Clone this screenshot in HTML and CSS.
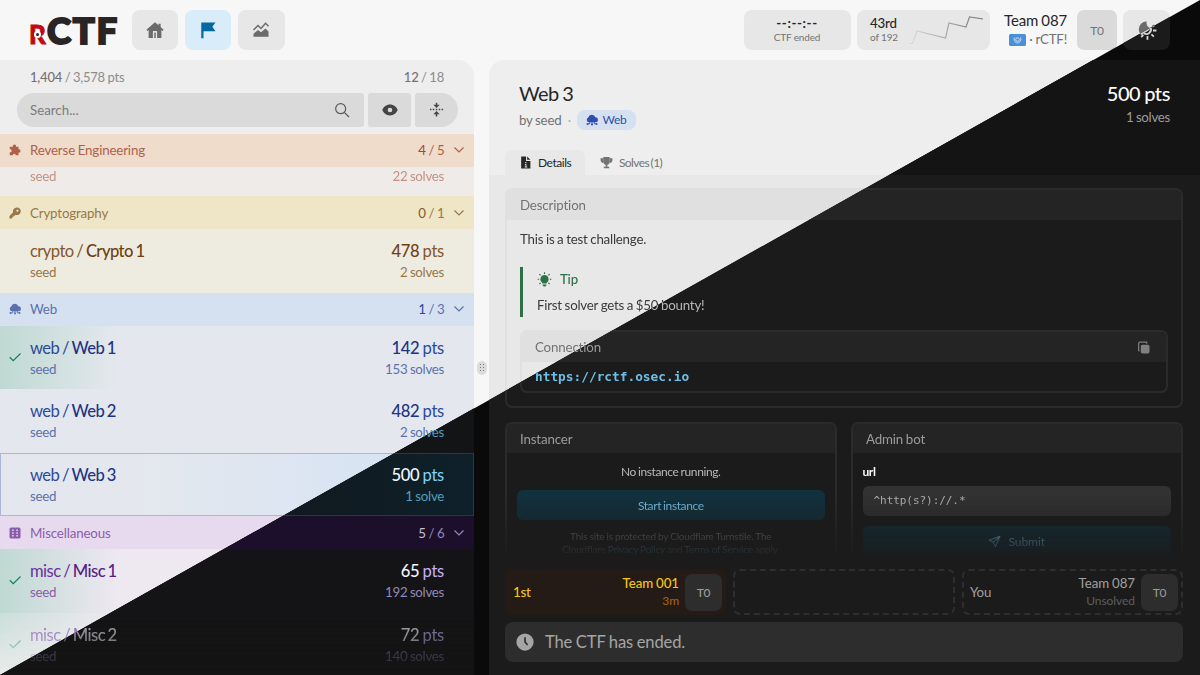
FILE: index.html
```html
<!DOCTYPE html>
<html lang="en">
<head>
    <meta charset="UTF-8">
    <meta name="viewport" content="width=device-width, initial-scale=1.0">
    <title>rCTF - Challenges</title>
    <link rel="stylesheet" href="styles.css">
</head>
<body>

    <!-- Icons -->
    <svg class="sprite" width="0" height="0">
        <defs>
            <linearGradient id="fade" x1="0" y1="0" x2="1" y2="0">
                <stop offset="0" stop-color="#777" stop-opacity="0.1"/>
                <stop offset="1" stop-color="#777"/>
            </linearGradient>
        </defs>
        <symbol id="home" viewBox="0 0 24 24"><path fill="currentColor" fill-rule="evenodd" d="M12 1.500L.5 11.500l1.500 1.700 1.500-1.200V22.500h5.700v-8.200a1 1 0 0 1 1-1h3.600a1 1 0 0 1 1 1v8.200h5.700V12l1.500 1.200 1.500-1.700-4-3.500V3.500h-2.800v2.200zM11 15.200h2v7.300h-2z"/></symbol>
        <symbol id="flag" viewBox="0 0 24 24"><path fill="currentColor" d="M3 2h19l-4.200 5.800L22 13.500H6V23H3z"/></symbol>
        <symbol id="chart" viewBox="0 0 24 24"><path fill="currentColor" d="M2 21v-4l6-5 4 3 6-5 4 4v7z"/><path fill="none" stroke="currentColor" stroke-width="2" d="M2 12l6-6 4 4 6-7 4 4"/></symbol>
        <symbol id="moon" viewBox="0 0 24 24"><path fill="currentColor" d="M11.500 2.500A9 9 0 0 0 3 11.500a8.500 8.500 0 0 0 2.500 6L12 13.500a4.500 4.500 0 0 0 3.500-3.500A7 7 0 0 1 11.500 2.500z"/><path stroke="currentColor" stroke-width="2" d="M18.500 12.500h3.800M16.800 16.800l2.700 2.400M12.500 18.500v4M8 17l-2.300 2.800M17.600 8.500l2.600-1.600"/><path fill="none" stroke="currentColor" stroke-width="2" d="M8.500 15.500A5 5 0 0 0 16 9.500"/></symbol>
        <symbol id="search" viewBox="0 0 24 24"><g fill="none" stroke="currentColor" stroke-width="1.800"><circle cx="10" cy="10" r="7.500"/><path d="M15.500 15.500l7 7"/></g></symbol>
        <symbol id="eye" viewBox="0 0 24 24"><path fill="currentColor" fill-rule="evenodd" d="M12 3.800C6.500 3.800 2 7.500.5 12c1.500 4.500 6 8.200 11.500 8.200s10-3.700 11.500-8.200C22 7.500 17.500 3.800 12 3.800zm0 4.700a3.500 3.500 0 1 1 0 7 3.500 3.500 0 0 1 0-7z"/></symbol>
        <symbol id="collapse" viewBox="0 0 24 24"><path fill="currentColor" d="M10.800 1h2.400v3.500h3.800L12 9.500 7 4.500h3.800zM10.800 23h2.400v-3.500h3.800L12 14.500 7 19.500h3.800zM1.500 10.800h2.400v2.400H1.500zM6 10.800h2.400v2.400H6zM10.800 10.800h2.400v2.400h-2.400zM15.600 10.800h2.400v2.400h-2.400zM20.200 10.800h2.400v2.400h-2.400z"/></symbol>
        <symbol id="chevron" viewBox="0 0 24 24"><path fill="none" stroke="currentColor" stroke-width="2.400" d="M3 7l9 9 9-9"/></symbol>
        <symbol id="check" viewBox="0 0 24 24"><path fill="none" stroke="currentColor" stroke-width="2.400" d="M1.500 12.500l7 7L23 5"/></symbol>
        <symbol id="puzzle" viewBox="0 0 24 24"><path fill="currentColor" d="M1.500 5.500h6.300a3.300 3.300 0 1 1 6.200 0h5v5.400a3.200 3.200 0 1 1 0 6.200v5.400h-5.500a3 3 0 1 0-6 0H1.500v-6a3 3 0 1 0 0-5.800z"/></symbol>
        <symbol id="key" viewBox="0 0 24 24"><path fill="currentColor" fill-rule="evenodd" d="M15.500 1a7.500 7.500 0 0 0-7.200 9.600L1 17.900V23h5v-2.700h2.800v-2.800h2.700l2-2A7.500 7.500 0 1 0 15.500 1zm1.300 4.200a2.200 2.200 0 1 1 0 4.400 2.200 2.200 0 0 1 0-4.400z"/></symbol>
        <symbol id="cloud" viewBox="0 0 24 24"><path fill="currentColor" d="M6 16.500A5 5 0 0 1 4.500 7 7.500 7.500 0 0 1 18.800 6.500 5 5 0 0 1 19 16.500z"/><path fill="none" stroke="currentColor" stroke-width="1.800" d="M12 15v7M7.500 15v4.500H4M16.500 15v4.500H20"/><circle cx="3" cy="20" r="2" fill="currentColor"/><circle cx="21" cy="20" r="2" fill="currentColor"/><circle cx="12" cy="21" r="2" fill="currentColor"/></symbol>
        <symbol id="dice" viewBox="0 0 24 24"><path fill="currentColor" fill-rule="evenodd" d="M4 1h16a3 3 0 0 1 3 3v16a3 3 0 0 1-3 3H4a3 3 0 0 1-3-3V4a3 3 0 0 1 3-3zM6.300 5v3h3V5zM14.700 5v3h3V5zM6.300 10.500v3h3v-3zM14.700 10.500v3h3v-3zM6.300 16v3h3v-3zM14.700 16v3h3v-3z"/></symbol>
        <symbol id="doc" viewBox="0 0 24 24"><path fill="currentColor" fill-rule="evenodd" d="M4 1h9v8h8v14H4zM11.500 11v2.200h2.200V11zM10.800 14.800v1.500h1.300v3.200h-1.500V21h4.600v-1.500h-1.500v-4.700z"/><path fill="currentColor" d="M15 1l6 6h-6z"/></symbol>
        <symbol id="trophy" viewBox="0 0 24 24"><path fill="currentColor" d="M6 2h12v10a6 6 0 0 1-4.500 4.500V20H17v2.500H7V20h3.500v-3.500A6 6 0 0 1 6 12z"/><path fill="currentColor" d="M1 4h5v9C3 13 1 10 1 7zM18 4h5v3c0 3-2 6-5 6z"/></symbol>
        <symbol id="bulb" viewBox="0 0 24 24"><path fill="currentColor" d="M12 5a6.500 6.500 0 0 0-3.500 12v1.500h7V17A6.500 6.500 0 0 0 12 5zM9 20h6v1.500L13 23h-2l-2-1.500z"/><path stroke="currentColor" stroke-width="1.800" d="M12 .5v2.500M1 11.500h2.500M20.500 11.500H23M3.800 3.500l2 2M20.200 3.500l-2 2M3.800 19.500l2-2M20.200 19.500l-2-2"/></symbol>
        <symbol id="copy" viewBox="0 0 24 24"><rect x="7" y="7" width="16" height="16" rx="3" fill="currentColor"/><path fill="none" stroke="currentColor" stroke-width="2.200" d="M5 18H3V5a3 3 0 0 1 3-3h12v3"/></symbol>
        <symbol id="send" viewBox="0 0 24 24"><path fill="none" stroke="currentColor" stroke-width="2" stroke-linejoin="round" d="M22 2.500L2 9.500l7.500 4L14 21.500zM22 2.500L9.500 13.500"/></symbol>
        <symbol id="clock" viewBox="0 0 24 24"><circle cx="12" cy="12" r="11.500" fill="currentColor"/><path fill="none" class="hands" stroke-width="2.200" d="M12 5.500V12l3.500 4"/></symbol>
    </svg>

    <div class="app light" id="app">
        <!-- Top bar -->
        <div class="topbar">
            <div class="logo"><span class="logo-r">R<i></i></span><span class="logo-ctf">CTF</span></div>
            <div class="nav">
                <div class="nav-btn"><svg class="i18"><use href="#home"/></svg></div>
                <div class="nav-btn active"><svg class="i18"><use href="#flag"/></svg></div>
                <div class="nav-btn"><svg class="i18"><use href="#chart"/></svg></div>
            </div>
            <div class="timer">
                <div class="timer-val">--:--:--</div>
                <div class="tiny">CTF ended</div>
            </div>
            <div class="rank">
                <div>
                    <div class="rank-val">43rd</div>
                    <div class="tiny">of 192</div>
                </div>
                <svg width="75" height="32" viewBox="0 0 75 32"><path fill="none" stroke="url(#fade)" stroke-width="1.200" d="M0 29.500h3.500L8 17l28.500 7L40 9l17 4 3.500-10L74 5"/></svg>
            </div>
            <div class="team">
                <div class="team-name">Team 087</div>
                <div class="team-sub"><svg width="17" height="12" viewBox="0 0 17 12"><rect width="17" height="12" rx="1.500" fill="#4a90d9"/><g fill="none" stroke="#e4f0fb"><circle cx="8.500" cy="5.600" r="1.800" stroke-width=".8"/><path d="M5.500 3.500c-1 2 0 5 3 5.500 3-.5 4-3.500 3-5.500" stroke-width=".8"/></g></svg> <b>·</b> <span>rCTF!</span></div>
            </div>
            <div class="avatar">T0</div>
            <div class="nav-btn theme"><svg class="i22"><use href="#moon"/></svg></div>
        </div>

        <div class="main">
            <!-- Challenge list -->
            <div class="sidebar">
                <div class="stats"><span><b>1,404</b> / 3,578 pts</span><span><b>12</b> / 18</span></div>
                <div class="filters">
                    <div class="search"><span>Search...</span><svg class="i16"><use href="#search"/></svg></div>
                    <div class="filter"><svg class="i16"><use href="#eye"/></svg></div>
                    <div class="filter last"><svg class="i15"><use href="#collapse"/></svg></div>
                </div>

                <div class="list">
                    <div class="cat rev"><svg class="i12"><use href="#puzzle"/></svg><span class="grow">Reverse Engineering</span><span><b>4</b> / 5</span><svg class="chev"><use href="#chevron"/></svg></div>
                    <div class="row rev partial">
                        <div class="line sub"><span>seed</span><span>22 solves</span></div>
                    </div>

                    <div class="cat crypto"><svg class="i12"><use href="#key"/></svg><span class="grow">Cryptography</span><span><b>0</b> / 1</span><svg class="chev"><use href="#chevron"/></svg></div>
                    <div class="row crypto">
                        <div class="line title"><span>crypto / <b>Crypto 1</b></span><span class="pts"><b>478</b> pts</span></div>
                        <div class="line sub"><span>seed</span><span>2 solves</span></div>
                    </div>

                    <div class="cat web"><svg class="i12"><use href="#cloud"/></svg><span class="grow">Web</span><span><b>1</b> / 3</span><svg class="chev"><use href="#chevron"/></svg></div>
                    <div class="row web solved">
                        <svg class="tick"><use href="#check"/></svg>
                        <div class="line title"><span>web / <b>Web 1</b></span><span class="pts"><b>142</b> pts</span></div>
                        <div class="line sub"><span>seed</span><span>153 solves</span></div>
                    </div>
                    <div class="row web">
                        <div class="line title"><span>web / <b>Web 2</b></span><span class="pts"><b>482</b> pts</span></div>
                        <div class="line sub"><span>seed</span><span>2 solves</span></div>
                    </div>
                    <div class="row web selected">
                        <div class="line title"><span>web / <b>Web 3</b></span><span class="pts"><b>500</b> pts</span></div>
                        <div class="line sub"><span>seed</span><span>1 solve</span></div>
                    </div>

                    <div class="cat misc"><svg class="i12"><use href="#dice"/></svg><span class="grow">Miscellaneous</span><span><b>5</b> / 6</span><svg class="chev"><use href="#chevron"/></svg></div>
                    <div class="row misc solved">
                        <svg class="tick"><use href="#check"/></svg>
                        <div class="line title"><span>misc / <b>Misc 1</b></span><span class="pts"><b>65</b> pts</span></div>
                        <div class="line sub"><span>seed</span><span>192 solves</span></div>
                    </div>
                    <div class="row misc solved fading">
                        <svg class="tick"><use href="#check"/></svg>
                        <div class="line title"><span>misc / <b>Misc 2</b></span><span class="pts"><b>72</b> pts</span></div>
                        <div class="line sub"><span>seed</span><span>140 solves</span></div>
                    </div>
                </div>
            </div>

            <div class="gutter"><div class="grip"><i></i><i></i><i></i><i></i><i></i><i></i></div></div>

            <!-- Challenge -->
            <div class="detail">
                <div class="detail-head">
                    <div class="head-line">
                        <div class="chal-name">Web 3</div>
                        <div class="chal-pts">500 pts</div>
                    </div>
                    <div class="head-line second">
                        <div class="by"><span>by seed</span><em>·</em><span class="chip"><svg class="i12"><use href="#cloud"/></svg>Web</span></div>
                        <div class="chal-solves">1 solves</div>
                    </div>
                    <div class="tabs">
                        <div class="tab active"><svg class="i13"><use href="#doc"/></svg><span>Details</span></div>
                        <div class="tab"><svg class="i13"><use href="#trophy"/></svg><span>Solves (1)</span></div>
                    </div>
                </div>

                <div class="detail-body">
                    <div class="card desc">
                        <div class="card-head">Description</div>
                        <div class="card-body">
                            <p class="text">This is a test challenge.</p>
                            <div class="tip">
                                <div class="tip-head"><svg class="i15"><use href="#bulb"/></svg>Tip</div>
                                <p class="text bounty">First solver gets a $50 bounty!</p>
                            </div>
                            <div class="card conn">
                                <div class="card-head">Connection<svg class="i13"><use href="#copy"/></svg></div>
                                <div class="conn-url">https://rctf.osec.io</div>
                            </div>
                        </div>
                    </div>

                    <div class="tools">
                        <div class="card tool">
                            <div class="card-head">Instancer</div>
                            <div class="tool-body">
                                <div class="no-inst">No instance running.</div>
                                <div class="btn">Start instance</div>
                                <div class="legal">This site is protected by Cloudflare Turnstile. The<br>Cloudflare <b>Privacy Policy</b> and <b>Terms of Service</b> apply.</div>
                            </div>
                        </div>
                        <div class="card tool">
                            <div class="card-head">Admin bot</div>
                            <div class="tool-body">
                                <div class="url-label">url</div>
                                <div class="field">^http(s?)://.*</div>
                                <div class="btn submit"><svg class="i13"><use href="#send"/></svg>Submit</div>
                            </div>
                        </div>
                    </div>
                </div>

                <div class="detail-foot">
                    <div class="bloods">
                        <div class="blood first"><span class="grow">1st</span><div class="who"><div>Team 001</div><small>3m</small></div><div class="avatar small">T0</div></div>
                        <div class="blood empty"></div>
                        <div class="blood empty you"><span class="grow">You</span><div class="who"><div>Team 087</div><small>Unsolved</small></div><div class="avatar small">T0</div></div>
                    </div>
                    <div class="ended"><svg class="i17"><use href="#clock"/></svg><span>The CTF has ended.</span></div>
                </div>
            </div>
        </div>
    </div>

    <script>
        // second copy of the app in the dark theme, cut along the diagonal
        const app = document.getElementById('app');
        const dark = app.cloneNode(true);
        dark.removeAttribute('id');
        dark.className = 'app dark';
        dark.setAttribute('aria-hidden', 'true');
        document.body.appendChild(dark);
    </script>
</body>
</html>
```
FILE: styles.css
```css
* {
    box-sizing: border-box;
}

body {
    margin: 0;
    position: relative;
    width: 1200px;
    height: 675px;
    overflow: hidden;
    font-family: Lato, "Liberation Sans", sans-serif;
    font-size: 13.3px;
    letter-spacing: -0.22px;
    word-spacing: -0.5px;
}

b, em, i, small {
    font-style: normal;
    font-weight: inherit;
}

p {
    margin: 0;
}

svg {
    display: block;
    flex: none;
}

.sprite {
    position: absolute;
}

/* themes */
.light {
    --bg: #f7f7f7;
    --panel: #eeeeee;
    --body: #e8e8e8;
    --btn: #e7e7e7;
    --input: #dadada;
    --edge: #e0e0e0;
    --text: #262626;
    --text2: #3a3a3a;
    --muted: #737373;
    --muted2: #8c8c8c;
    --icon: #6b6b6b;
    --avatar: #dadada;
    --active: #d9ecfa;
    --active-text: #0369a1;
    --card-head: #e0e0e0;
    --row-rev: #eeebe8;
    --row-crypto: #eeece0;
    --row-web: #e4e8ee;
    --row-misc: #eee8f1;
    --cat-rev: #f0dccb;
    --cat-crypto: #efe6c8;
    --cat-web: #d5e1f0;
    --cat-misc: #e8daee;
    --web1: #1e3382;
    --web2: #2c4a98;
    --web3: #5a71ad;
    --misc1: #581c87;
    --misc2: #6b2fa0;
    --misc3: #8a5dab;
    --solved: #bfd9d2;
    --tick: #15805c;
    --sel: #d3e2f5;
    --sel-edge: #aab8d6;
    --chip: #d5e1f0;
    --chip-text: #2f4fae;
    --green: #2d7048;
}

.dark {
    --bg: #0a0a0a;
    --panel: #141414;
    --body: #1b1b1b;
    --btn: #1b1b1b;
    --input: #2d2d2d;
    --edge: #2b2b2b;
    --text: #fafafa;
    --text2: #b8b8b8;
    --muted: #9c9c9c;
    --muted2: #8a8a8a;
    --icon: #d4d4d4;
    --avatar: #2d2d2d;
    --active: #0c2a3a;
    --active-text: #7dd3fc;
    --card-head: #242424;
    --row-rev: #151413;
    --row-crypto: #151413;
    --row-web: #131416;
    --row-misc: #141416;
    --cat-rev: #2a1408;
    --cat-crypto: #261c06;
    --cat-web: #0a1b2a;
    --cat-misc: #1b0f2b;
    --web1: #f0f9ff;
    --web2: #7dd3fc;
    --web3: #4f9fc0;
    --misc1: #f5f3ff;
    --misc2: #c4b0fa;
    --misc3: #9388b8;
    --solved: #141416;
    --tick: #34d399;
    --sel: #0e202a;
    --sel-edge: #213a46;
    --chip: #0c2a3a;
    --chip-text: #7dd3fc;
    --green: #4ade80;
}

.app {
    width: 1200px;
    height: 675px;
    display: flex;
    flex-direction: column;
    background: var(--bg);
    color: var(--text);
}

.app.dark {
    position: absolute;
    top: 0;
    left: 0;
    clip-path: polygon(1200px 0, 1200px 675px, 0 675px);
}

.grow {
    flex: 1;
}

.i12 { width: 12px; height: 12px; }
.i13 { width: 13px; height: 13px; }
.i15 { width: 15px; height: 15px; }
.i16 { width: 16px; height: 16px; }
.i17 { width: 18px; height: 18px; }
.i18 { width: 18px; height: 18px; }
.i22 { width: 22px; height: 22px; }

.hands {
    stroke: #2d2d2d;
}

/* top bar */
.topbar {
    height: 60px;
    padding: 0 30px 0 29px;
    display: flex;
    align-items: center;
}

.logo {
    width: 102.600px;
    height: 40px;
    display: flex;
    align-items: baseline;
    font-weight: 900;
    line-height: 40px;
}

.logo-r {
    position: relative;
    width: 18px;
    font-size: 26px;
    color: #c00a10;
    -webkit-text-stroke: 0.8px #c00a10;
}

.logo-r i {
    position: absolute;
    left: 5px;
    top: 17px;
    width: 7px;
    height: 7px;
    border: 2px solid #fff;
    border-radius: 50%;
    background: #1c2a3a;
}

.logo-ctf {
    font-size: 36.500px;
    letter-spacing: 1.7px;
    color: #292524;
    -webkit-text-stroke: 2px #292524;
}

.nav {
    display: flex;
    gap: 6.600px;
    flex: 1;
}

.nav-btn {
    width: 46.600px;
    height: 40px;
    border-radius: 8px;
    background: var(--btn);
    color: var(--icon);
    display: flex;
    align-items: center;
    justify-content: center;
}

.nav-btn.active {
    background: var(--active);
    color: var(--active-text);
}

.timer, .rank {
    height: 40px;
    border-radius: 8px;
    background: var(--btn);
    display: flex;
}

.timer {
    width: 107px;
    flex-direction: column;
    align-items: center;
    justify-content: center;
    margin-right: 6.500px;
}

.timer-val, .rank-val {
    font-size: 13.3px;
    line-height: 15px;
    font-weight: 500;
}

.timer-val {
    font-weight: 700;
    letter-spacing: 0.6px;
}

.tiny {
    font-size: 10px;
    line-height: 13px;
    letter-spacing: -0.15px;
    word-spacing: 0;
    color: var(--muted);
}

.rank {
    width: 133px;
    padding: 0 6px 0 13px;
    align-items: center;
    justify-content: space-between;
    margin-right: 14px;
}

.team {
    width: 63px;
    text-align: right;
    margin-right: 10px;
    white-space: nowrap;
}

.team-name {
    font-size: 15px;
    line-height: 19px;
    letter-spacing: -0.15px;
}

.team-sub {
    display: flex;
    align-items: center;
    justify-content: flex-end;
    gap: 3px;
    line-height: 19px;
    color: var(--muted);
}

.avatar {
    width: 40px;
    height: 40px;
    border-radius: 7px;
    background: var(--avatar);
    color: var(--muted);
    font-size: 12px;
    display: flex;
    align-items: center;
    justify-content: center;
}

.theme {
    margin-left: 6.400px;
}

/* sidebar */
.main {
    height: 615px;
    display: flex;
}

.sidebar {
    width: 474px;
    background: var(--panel);
    border-radius: 0 16px 0 0;
    overflow: hidden;
}

.stats {
    height: 33.300px;
    padding: 0 30px 0 30px;
    display: flex;
    justify-content: space-between;
    align-items: center;
    color: var(--muted2);
    font-size: 13px;
}

.stats b {
    color: var(--muted);
    font-weight: 500;
}

.filters {
    display: flex;
    gap: 4px;
    padding: 0 16.500px 0 17px;
    height: 40.300px;
}

.search, .filter {
    height: 33.300px;
    background: var(--input);
    border-radius: 3px;
    display: flex;
    align-items: center;
}

.search {
    flex: 1;
    border-radius: 17px 3px 3px 17px;
    padding: 0 14px 0 13px;
    justify-content: space-between;
    color: #7c7c7c;
}

.search span {
    letter-spacing: 0;
}

.search svg {
    color: #5a5a5a;
}

.filter {
    width: 42.600px;
    justify-content: center;
    color: #454545;
}

.filter.last {
    border-radius: 3px 17px 17px 3px;
}

.cat {
    height: 33.300px;
    padding: 0 9px 0 9px;
    display: flex;
    align-items: center;
    color: var(--c3);
    background: var(--cat);
}

.cat .i12 {
    margin-right: 9px;
}

.cat .grow {
    letter-spacing: -0.15px;
}

.cat b {
    color: var(--c2);
}

.chev {
    width: 12px;
    height: 12px;
    margin-left: 8.500px;
}

.rev { --cat: var(--cat-rev); --rowbg: var(--row-rev); --c1: #7c2d12; --c2: #984b38; --c3: #ad614c; }
.crypto { --cat: var(--cat-crypto); --rowbg: var(--row-crypto); --c1: #713f12; --c2: #85572a; --c3: #98774a; }
.web { --cat: var(--cat-web); --rowbg: var(--row-web); --c1: var(--web1); --c2: var(--web2); --c3: var(--web3); }
.misc { --cat: var(--cat-misc); --rowbg: var(--row-misc); --c1: var(--misc1); --c2: var(--misc2); --c3: var(--misc3); }

.dark .cat.misc {
    --c2: #c6bfd0;
}

.row {
    position: relative;
    height: 63.350px;
    padding: 12px 30px 0 30px;
    background: var(--rowbg);
}

.line {
    display: flex;
    justify-content: space-between;
    line-height: 21px;
}

.title {
    font-size: 16.600px;
    letter-spacing: -0.55px;
    word-spacing: -1.100px;
    color: var(--c2);
}

.title b {
    color: var(--c1);
    font-weight: 500;
}

.title .pts {
    letter-spacing: -0.3px;
    word-spacing: -0.8px;
}

.sub {
    color: var(--c3);
    letter-spacing: -0.3px;
}

.partial {
    height: 29px;
    padding-top: 0;
}

.partial .sub {
    opacity: 0.65;
    line-height: 19px;
}

.solved {
    background: linear-gradient(90deg, var(--solved), var(--rowbg) 118px);
}

.tick {
    position: absolute;
    left: 9px;
    top: 25px;
    width: 12px;
    height: 12px;
    color: var(--tick);
}

.selected {
    border: 1px solid var(--sel-edge);
    padding: 11px 29px 0;
    background: linear-gradient(90deg, var(--rowbg) 30%, var(--sel));
}

.fading {
    -webkit-mask-image: linear-gradient(rgba(0,0,0,0.75), rgba(0,0,0,0.1));
    mask-image: linear-gradient(rgba(0,0,0,0.75), rgba(0,0,0,0.1));
}

.gutter {
    width: 15px;
    display: flex;
    align-items: center;
    justify-content: center;
}

.grip {
    width: 10px;
    height: 14px;
    border-radius: 5px;
    background: #dcdcdc;
    display: grid;
    grid-template-columns: 1px 1px;
    grid-auto-rows: 1px;
    gap: 2px;
    place-content: center;
}

.grip i {
    background: #777;
}

/* detail panel */
.detail {
    flex: 1;
    background: var(--body);
    border-radius: 16px 0 0 0;
    overflow: hidden;
}

.detail-head {
    height: 115px;
    padding: 22px 30px 0;
    background: var(--panel);
}

.head-line {
    display: flex;
    justify-content: space-between;
    line-height: 22px;
}

.chal-name, .chal-pts {
    font-size: 20px;
    letter-spacing: -0.6px;
    word-spacing: -0.8px;
}

.chal-pts {
    font-weight: 500;
    letter-spacing: -0.4px;
}

.second {
    margin-top: 5px;
}

.by {
    display: flex;
    align-items: center;
    color: var(--muted);
}

.by em {
    width: 16px;
    text-align: center;
    color: #b5b5b5;
}

.chal-solves {
    line-height: 16px;
    color: var(--muted);
    letter-spacing: -0.3px;
}

.chip {
    height: 20px;
    padding: 0 9px;
    border-radius: 8px;
    background: var(--chip);
    color: var(--chip-text);
    font-size: 12px;
    display: flex;
    align-items: center;
    gap: 4px;
}

.tabs {
    display: flex;
    margin: 19px 0 0 -14px;
}

.tab {
    height: 25px;
    width: 80px;
    padding: 0 0 0 14px;
    display: flex;
    align-items: center;
    gap: 6px;
    font-size: 12px;
    letter-spacing: -0.45px;
    color: var(--muted);
    white-space: nowrap;
}

.tab.active {
    background: var(--body);
    color: var(--text);
    border-radius: 7px 7px 0 0;
}

.tab + .tab {
    margin-left: 1px;
    word-spacing: -1px;
    letter-spacing: -0.6px;
}

.detail-body {
    height: 380px;
    padding: 13px 17px 0 16px;
    overflow: hidden;
    -webkit-mask-image: linear-gradient(#000 320px, transparent 386px);
    mask-image: linear-gradient(#000 320px, transparent 386px);
}

.card {
    border: 2px solid var(--edge);
    border-radius: 7px;
}

.card-head {
    height: 30px;
    padding: 0 13px;
    background: var(--card-head);
    border-radius: 5px 5px 0 0;
    color: var(--muted);
    letter-spacing: -0.15px;
    display: flex;
    align-items: center;
    justify-content: space-between;
}

.desc {
    height: 220px;
}

.card-body {
    padding: 9px 13px 0;
}

.text {
    line-height: 20px;
    color: var(--text2);
}

.tip {
    height: 50px;
    margin: 18px 0 13px;
    padding-left: 14px;
    border-left: 3px solid var(--green);
}

.tip-head {
    display: flex;
    align-items: center;
    gap: 8px;
    height: 24px;
    color: var(--green);
    font-weight: 500;
}

.bounty {
    padding-top: 4px;
}

.conn {
    height: 63px;
}

.conn-url {
    padding-left: 13px;
    line-height: 30px;
    font-family: "DejaVu Sans Mono", "Liberation Mono", monospace;
    font-size: 12.800px;
    font-weight: 700;
    letter-spacing: 0;
    color: #6cbfe6;
}

.conn .i13 {
    color: #808080;
    margin-right: 3px;
}

.tools {
    display: flex;
    gap: 14px;
    margin-top: 14px;
}

.tool {
    width: 332px;
    height: 150px;
}

.tool .card-head {
    height: 29px;
}

.tool-body {
    padding: 8px 10px 8px 9.500px;
    font-size: 12px;
    letter-spacing: -0.4px;
    word-spacing: -0.6px;
}

.no-inst {
    line-height: 21px;
    text-align: center;
    color: var(--text2);
}

.btn {
    height: 30px;
    margin-top: 8px;
    border-radius: 6px;
    background: #12313f;
    color: #78c8ee;
    display: flex;
    align-items: center;
    justify-content: center;
    gap: 7px;
}

.legal {
    margin-top: 10px;
    font-size: 10px;
    line-height: 13px;
    letter-spacing: -0.2px;
    word-spacing: -0.2px;
    text-align: center;
    color: #7c7c7c;
}

.legal b {
    color: #5b96b4;
}

.url-label {
    line-height: 21px;
    font-weight: 700;
}

.field {
    height: 30px;
    margin-top: 4px;
    padding-left: 11px;
    border-radius: 6px;
    background: #323232;
    color: #b5b5b5;
    font-family: "DejaVu Sans Mono", "Liberation Mono", monospace;
    font-size: 11px;
    letter-spacing: -0.05px;
    line-height: 30px;
}

.submit {
    margin-top: 10px;
    letter-spacing: -0.05px;
}

.detail-foot {
    padding: 14px 17px 0 16px;
}

.bloods {
    display: grid;
    grid-template-columns: 221px 222px 221px;
    gap: 7px;
}

.blood {
    height: 46px;
    border-radius: 7px;
    padding: 0 4px 0 8px;
    display: flex;
    align-items: center;
    color: #a0a0a0;
}

.first {
    background: #241b17;
    color: #f5c518;
    font-weight: 500;
}

.empty {
    border: 2px dashed #2e2e2e;
}

.you {
    padding: 0 3px 0 6px;
}

.who {
    text-align: right;
    line-height: 18px;
    margin-right: 6px;
    letter-spacing: -0.05px;
    word-spacing: -0.5px;
}

.who small {
    display: block;
    font-size: 12px;
    color: #5e5e5e;
}

.first small {
    color: #a16207;
}

.small {
    width: 37px;
    height: 37px;
}

.ended {
    height: 40px;
    margin-top: 7px;
    padding: 0 11px;
    border-radius: 8px;
    background: var(--input);
    display: flex;
    align-items: center;
    gap: 11px;
    font-size: 16.600px;
    letter-spacing: -0.15px;
    color: #a5a5a5;
}
```
